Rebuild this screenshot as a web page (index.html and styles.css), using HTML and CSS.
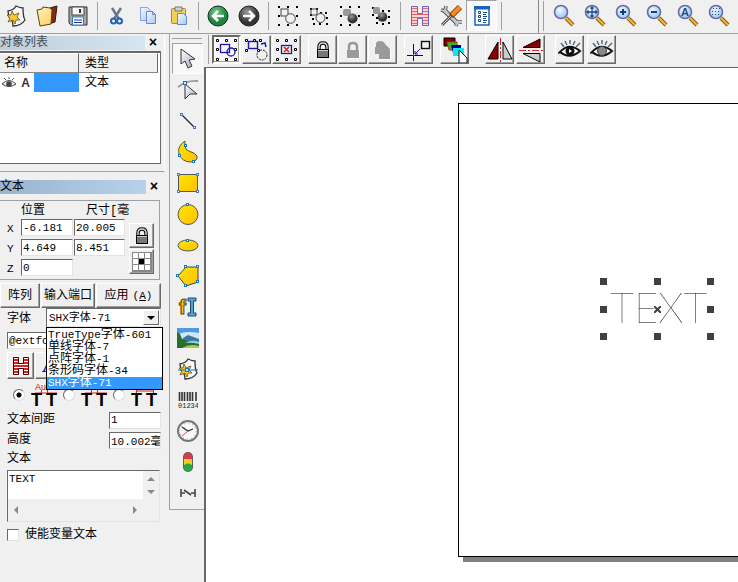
FILE: index.html
```html
<!DOCTYPE html>
<html lang="zh-CN">
<head>
    <meta charset="UTF-8">
    <meta name="viewport" content="width=device-width, initial-scale=1.0">
    <title>TEXT</title>
    <link rel="stylesheet" href="styles.css">
</head>
<body>
    <!-- shared icon parts -->
    <svg width="0" height="0" class="defs" aria-hidden="true">
        <defs>
            <linearGradient id="gold" x1="0" y1="0" x2="1" y2="1"><stop offset="0" stop-color="#ffe600"/><stop offset="1" stop-color="#ffc000"/></linearGradient>
            <linearGradient id="steel" x1="0" y1="0" x2="1" y2="1"><stop offset="0" stop-color="#fff"/><stop offset="1" stop-color="#a4a8c0"/></linearGradient>
            <linearGradient id="folder" x1="0" y1="0" x2="1" y2="1"><stop offset="0" stop-color="#fff2c0"/><stop offset="1" stop-color="#fbd05a"/></linearGradient>
            <linearGradient id="paper" x1="0" y1="0" x2="1" y2="1"><stop offset="0" stop-color="#f4f9ff"/><stop offset="1" stop-color="#a9c8f4"/></linearGradient>
            <radialGradient id="green" cx=".4" cy=".3"><stop offset="0" stop-color="#6fca88"/><stop offset="1" stop-color="#1d8440"/></radialGradient>
            <radialGradient id="dark" cx=".4" cy=".3"><stop offset="0" stop-color="#999"/><stop offset="1" stop-color="#333"/></radialGradient>
            <radialGradient id="lens" cx=".4" cy=".35"><stop offset="0" stop-color="#f2faff"/><stop offset="1" stop-color="#a9d2f3"/></radialGradient>
            <pattern id="hatch" width="3" height="3" patternUnits="userSpaceOnUse"><rect width="3" height="3" fill="#ffd5d5"/><rect width="3" height="1" fill="#e46464"/></pattern>
            <pattern id="hatchRed" width="3" height="3" patternUnits="userSpaceOnUse"><rect width="3" height="3" fill="#fff"/><rect width="3" height="2" fill="#e02020"/></pattern>
            <g id="magnifier">
                <path d="M14 14l7 7" stroke="#8a5a10" stroke-width="4"/>
                <path d="M14 14l7 7" stroke="#f0b93c" stroke-width="2"/>
                <circle cx="9" cy="8" r="6.5" fill="url(#lens)" stroke="#6b6ba4" stroke-width="1.6"/>
            </g>
            <g id="dots8" fill="#000">
                <path d="M1 1h2v2h-2zM10 1h2v2h-2zM19 1h2v2h-2zM1 10h2v2h-2zM19 10h2v2h-2zM1 19h2v2h-2zM10 19h2v2h-2zM19 19h2v2h-2z"/>
            </g>
            <g id="page">
                <path d="M3 6Q9 5 11 1Q15 3 18 3Q18 12 20 15Q16 21 8 21Q8 15 4 12z" fill="#f8f8f8" stroke="#333" stroke-width="1.3"/>
                <path d="M7 6l2 4 5-2-2 4 3 3-4 0-1 4-2-4-5 2 2-4-3-3 4 0z" fill="#f8c832" stroke="#69500c" stroke-width=".8"/>
            </g>
            <g id="lock">
                <path d="M6 11V7q0-4 4-4t4 4v4" fill="none" stroke="#000" stroke-width="3.4"/>
                <path d="M6 11V7q0-4 4-4t4 4v4" fill="none" stroke="#ddd" stroke-width="1.4"/>
                <rect x="4.5" y="9.5" width="11" height="8" fill="#777" stroke="#000"/>
                <path d="M5 10.5h10" stroke="#ccc"/>
            </g>
            <g id="handles" fill="#fff" stroke="#000">
                <path d="M1.5 1.5h2v2h-2zM10.500 1.5h2v2h-2zM19.500 1.5h2v2h-2zM1.5 10.5h2v2h-2zM19.5 10.5h2v2h-2zM1.5 20.5h2v2h-2zM10.5 20.5h2v2h-2zM19.5 20.5h2v2h-2z"/>
            </g>
            <g id="eye">
                <path d="M3 13Q12 3 23 12Q13 21 3 13z" fill="#fff" stroke="#111" stroke-width="2"/>
                <path d="M1 14q2 0 3-1" stroke="#111" stroke-width="1.5" fill="none"/>
                <path d="M4 4l3 4M8 2l2 4M13 1v4M18 2l-2 4M23 4l-4 4" stroke="#4c6f74" stroke-width="1.5"/>
            </g>
            <g id="spacing">
                <text x="1" y="24" font-family="Liberation Sans" font-weight="bold" font-size="18">T</text>
                <text x="16" y="24" font-family="Liberation Sans" font-weight="bold" font-size="18">T</text>
            </g>
        </defs>
    </svg>

    <header class="topbar">
        <button class="tb" aria-label="新建"><svg width="22" height="22"><use href="#page"/></svg></button>
        <button class="tb" aria-label="打开"><svg width="24" height="22"><path d="M15 3l7-2-2 16-6 2z" fill="#7d2c18" stroke="#3c1408"/><path d="M2 5l5-1 1-2 7 1 2 2-1 14-11 2z" fill="url(#folder)" stroke="#5c4310"/></svg></button>
        <button class="tb" aria-label="保存"><svg width="20" height="20"><path d="M1 1h18v18H3l-2-2z" fill="#a5a9ae" stroke="#333"/><rect x="4" y="1" width="12" height="8" fill="#f7f9fa" stroke="#444"/><path d="M12 3v4" stroke="#333" stroke-width="2"/><rect x="4.5" y="11" width="11" height="8" fill="#fff" stroke="#367fa0"/><path d="M6 14h8M6 16.5h8" stroke="#2430a8"/></svg></button>
        <span class="sep"></span>
        <button class="tb" aria-label="剪切"><svg width="16" height="20"><path d="M3 2l7 11M12 2L5 13" stroke="#6b7686" stroke-width="2.5"/><g fill="none" stroke="#1f63b5" stroke-width="2"><circle cx="4.5" cy="15" r="2.5"/><circle cx="10.5" cy="15" r="2.5"/></g></svg></button>
        <button class="tb" aria-label="复制"><svg width="18" height="20"><path d="M1.5 1.5h7l3 3v10h-10z" fill="url(#paper)" stroke="#86a5dc"/><path d="M7.5 5.5h6l3 3v9h-9z" fill="url(#paper)" stroke="#6489cf"/><path d="M13.5 5.5v3h3" fill="none" stroke="#6489cf"/></svg></button>
        <button class="tb" aria-label="粘贴"><svg width="18" height="20"><rect x="1.5" y="2.5" width="14" height="15" rx="1" fill="#f6cf56" stroke="#ac862c"/><path d="M5 1h7v4H5z" fill="#ccd2da" stroke="#777"/><path d="M7.5 7.5h6l3 3v8h-9z" fill="url(#paper)" stroke="#6489cf"/></svg></button>
        <span class="sep"></span>
        <button class="tb" aria-label="后退"><svg width="22" height="22"><circle cx="11" cy="11" r="10" fill="url(#green)" stroke="#222"/><path d="M17 11H6M11 6l-5 5 5 5" fill="none" stroke="#fff" stroke-width="2.6"/></svg></button>
        <button class="tb" aria-label="前进"><svg width="22" height="22"><circle cx="11" cy="11" r="10" fill="url(#dark)" stroke="#222"/><path d="M5 11h11M11 6l5 5-5 5" fill="none" stroke="#fff" stroke-width="2.6"/></svg></button>
        <span class="sep"></span>
        <button class="tb" aria-label="组合"><svg width="22" height="22"><use href="#dots8"/><rect x="4" y="4" width="7" height="7" fill="none" stroke="#444"/><circle cx="13.5" cy="13.5" r="4.8" fill="#f0f0f0" stroke="#444"/></svg></button>
        <button class="tb" aria-label="解散组合"><svg width="22" height="22"><path d="M2 3h2v2h-2zM8 3h2v2h-2zM2 9h2v2h-2zM12 7h2v2h-2zM17 7h2v2h-2zM4 13h2v2h-2zM18 12h2v2h-2zM5 18h2v2h-2zM11 18h2v2h-2zM18 18h2v2h-2z"/><rect x="3" y="4" width="6" height="6" fill="none" stroke="#444"/><circle cx="12.5" cy="13" r="4.5" fill="#f0f0f0" stroke="#444"/></svg></button>
        <button class="tb" aria-label="群组"><svg width="22" height="22"><use href="#dots8"/><rect x="4" y="4" width="8" height="7" rx="2" fill="#999"/><circle cx="13.5" cy="13.5" r="5" fill="url(#dark)"/></svg></button>
        <button class="tb" aria-label="分离群组"><svg width="22" height="22"><path d="M2 2h2v2h-2zM2 9h2v2h-2zM12 5h2v2h-2zM18 5h2v2h-2zM6 12h2v2h-2zM18 11h2v2h-2zM6 17h2v2h-2zM12 18h2v2h-2zM18 17h2v2h-2z"/><rect x="3" y="2" width="7" height="7" rx="2" fill="#999"/><circle cx="12.5" cy="12" r="4.8" fill="url(#dark)"/></svg></button>
        <span class="sep"></span>
        <button class="tb" aria-label="填充"><svg width="20" height="22"><path d="M1.5 1.5h6v7h5v-7h6v19h-6v-7h-5v7h-6z" fill="url(#hatch)" stroke="#6a62c4"/></svg></button>
        <button class="tb" aria-label="系统参数"><svg width="24" height="24"><path d="M5 6l14 14" stroke="#555" stroke-width="5"/><path d="M2 6l4 1 1-5M17 22l1-4 5 0" fill="none" stroke="#555" stroke-width="3.6"/><path d="M2 6l4 1 1-5M17 22l1-4 5 0" fill="none" stroke="#c5c8cc" stroke-width="1.8"/><path d="M5 6l14 14" stroke="#c5c8cc" stroke-width="3"/><path d="M3 21L13 11" stroke="#555" stroke-width="3"/><path d="M3 21L13 11" stroke="#ccc"/><path d="M12 12l9-9" stroke="#7c3d0b" stroke-width="6"/><path d="M13 11l8-8" stroke="#f28b24" stroke-width="4"/></svg></button>
        <button class="tb pressed" aria-label="对象列表"><svg width="16" height="20"><rect x="1" y="1" width="14" height="18" fill="#fff" stroke="#1764b4" stroke-width="1.5"/><path d="M0 1.5h16" stroke="#1764b4" stroke-width="4"/><path d="M9 6.500h4M9 8.500h3M9 10.5h4M9 12.5h3M9 14.5h4M9 16.5h3" stroke="#174a86"/><path d="M4.5 5.5h2v2h-2zM4.500 9.500h2v2h-2zM4.500 13.500h2v2h-2z" fill="#fff" stroke="#1b4b90"/></svg></button>
        <span class="sep"></span>
        <span class="edge"></span>
        <span class="grip"></span>
        <button class="tb" aria-label="缩放"><svg width="23" height="23"><use href="#magnifier"/></svg></button>
        <button class="tb" aria-label="平移"><svg width="23" height="23"><use href="#magnifier"/><path d="M9 3v10M4 8h10M7.5 4.5L9 3l1.5 1.5M7.5 11.5L9 13l1.5-1.5M5.5 6.5L4 8l1.5 1.5M12.5 6.5L14 8l-1.5 1.5" fill="none" stroke="#244a86" stroke-width="1.3"/></svg></button>
        <button class="tb" aria-label="放大"><svg width="23" height="23"><use href="#magnifier"/><path d="M9 5v6M6 8h6" stroke="#183c7a" stroke-width="2"/></svg></button>
        <button class="tb" aria-label="缩小"><svg width="23" height="23"><use href="#magnifier"/><path d="M6 8h6" stroke="#183c7a" stroke-width="2"/></svg></button>
        <button class="tb" aria-label="全部"><svg width="23" height="23"><use href="#magnifier"/><text x="5" y="12" font-family="Liberation Sans" font-weight="bold" font-size="11" fill="#244a86">A</text></svg></button>
        <button class="tb" aria-label="选择"><svg width="23" height="23"><use href="#magnifier"/><path d="M6 4.5h7M5 7.5h9M5 10.5h9" stroke="#244a86" stroke-dasharray="1 2"/></svg></button>
    </header>

    <div class="main">
        <aside class="side">
            <section class="objects">
                <h2 class="caption inactive"><span>对象列表</span><button class="close" aria-label="关闭">×</button></h2>
                <div class="list">
                    <table>
                        <thead>
                            <tr><th>名称</th><th>类型</th></tr>
                        </thead>
                        <tbody>
                            <tr>
                                <td>
                                    <div class="name">
                                        <svg width="16" height="12"><path d="M1 7Q8 0 15 7Q8 12 1 7z" fill="#eee" stroke="#444"/><circle cx="8" cy="7" r="2.8" fill="#444"/><path d="M3 1l2 2M8 0v2M13 1l-2 2" stroke="#555"/></svg>
                                        <b>A</b><span class="marked"></span>
                                    </div>
                                </td>
                                <td>文本</td>
                            </tr>
                        </tbody>
                    </table>
                </div>
            </section>

            <section class="props">
                <h2 class="caption"><span>文本</span><button class="close" aria-label="关闭">×</button></h2>

                <div class="group">
                    <div class="coords">
                        <span></span><span class="head">位置</span><span class="head size">尺寸[毫</span>
                        <label for="posX">X</label><input id="posX" value="-6.181"><input aria-label="宽" value="20.005">
                        <label for="posY">Y</label><input id="posY" value="4.649"><input aria-label="高" value="8.451">
                        <label for="posZ">Z</label><input id="posZ" value="0">
                    </div>
                    <div class="anchors">
                        <button class="raised" aria-label="锁定"><svg width="20" height="20"><use href="#lock"/></svg></button>
                        <button class="raised" aria-label="基准点"><svg width="20" height="20"><rect width="20" height="20" fill="#888"/><path d="M1 1h5v5H1zM7 1h5v5H7zM13 1h5v5h-5zM1 7h5v5H1zM13 7h5v5h-5zM1 13h5v5H1zM7 13h5v5H7zM13 13h5v5h-5z" fill="#fff"/><path d="M7 7h5v5H7z"/></svg></button>
                    </div>
                </div>

                <div class="actions">
                    <button class="raised array">阵列</button>
                    <button class="raised port">输入端口</button>
                    <button class="raised apply">应用 <span class="latin">(<u>A</u>)</span></button>
                </div>

                <div class="fontrow">
                    <label for="font">字体</label>
                    <div class="combo">
                        <select id="font"><option>SHX字体-71</option></select>
                        <span class="arrow"></span>
                        <ul class="menu" role="listbox" aria-label="字体">
                            <li role="option"><span class="latin">TrueType</span>字体<span class="latin">-601</span></li>
                            <li role="option">单线字体<span class="latin">-7</span></li>
                            <li role="option">点阵字体<span class="latin">-1</span></li>
                            <li role="option">条形码字体<span class="latin">-34</span></li>
                            <li role="option" aria-selected="true" class="current"><span class="latin">SHX</span>字体<span class="latin">-71</span></li>
                        </ul>
                    </div>
                </div>

                <input class="face" aria-label="字体名称" value="@extfont">

                <div class="styles">
                    <button class="raised" aria-label="填充"><svg width="18" height="20"><path d="M1.5 1.5h5v6h5v-6h5v17h-5v-6h-5v6h-5z" fill="url(#hatchRed)" stroke="#400"/></svg></button>
                    <button class="raised" aria-label="倾斜"><svg width="20" height="20"><text x="4" y="16" font-family="Liberation Serif" font-weight="bold" font-style="italic" font-size="20" fill="#00d">A</text></svg></button>
                </div>

                <div class="modes">
                    <input type="radio" name="mode" aria-label="自动" checked>
                    <svg width="28" height="26"><text x="5" y="8" font-family="Liberation Sans" font-size="9" fill="#d00">Au</text><path d="M5 11h22M11.5 8v5M17.5 8v5" stroke="#d22"/><use href="#spacing"/></svg>
                    <input type="radio" name="mode" aria-label="边缘">
                    <svg width="28" height="26"><path d="M5 11h22M11.5 8v5M17.5 8v5" stroke="#d22"/><use href="#spacing"/></svg>
                    <input type="radio" name="mode" aria-label="中心">
                    <svg width="28" height="26"><path d="M7 9h16M6.5 6v5M23.5 6v5" stroke="#d22"/><use href="#spacing"/></svg>
                </div>

                <div class="field"><label for="gap">文本间距</label><input id="gap" value="1"></div>
                <div class="field"><label for="height">高度</label><input id="height" value="10.002毫米"></div>
                <label class="contentlabel" for="content">文本</label>
                <div class="editor">
                    <textarea id="content" spellcheck="false">TEXT</textarea>
                    <div class="bar vertical"><i class="up"></i><i class="down"></i></div>
                    <div class="bar horizontal"><i class="left"></i><i class="right"></i></div>
                </div>
                <label class="check"><input type="checkbox">使能变量文本</label>
            </section>
        </aside>

        <nav class="tools">
            <span class="toolgrip"></span>
            <button class="tb pressed" aria-label="选取"><svg width="20" height="22"><path d="M3 1v15l4-3 3 7 4-2-3-6 6-1z" fill="url(#steel)" stroke="#333"/></svg></button>
            <button class="tb" aria-label="节点"><svg width="22" height="22"><path d="M1 8Q10 1 21 2" fill="none" stroke="#999" stroke-width="1.8"/><path d="M8 5v15l5-5 7 0z" fill="url(#steel)" stroke="#333"/><rect x="6.5" y="2.5" width="3" height="3" fill="#cfe4ff" stroke="#3d6cb0"/></svg></button>
            <button class="tb" aria-label="直线"><svg width="18" height="18"><path d="M3 3l12 12" stroke="#222" stroke-width="1.3"/><g fill="#fff" stroke="#4a78c8"><rect x="1.5" y="1.5" width="2" height="2"/><rect x="14.5" y="14.5" width="2" height="2"/></g></svg></button>
            <button class="tb" aria-label="曲线"><svg width="22" height="24"><path d="M8 1Q0 6 2 14Q5 22 14 22Q21 21 20 16Q18 13 12 11Q7 10 8 1z" fill="url(#gold)" stroke="#665030"/><g fill="#fff" stroke="#1878b8"><rect x="7.5" y="4.5" width="2" height="2"/><rect x="1.5" y="14.5" width="2" height="2"/><rect x="15.5" y="20.5" width="2" height="2"/></g></svg></button>
            <button class="tb" aria-label="矩形"><svg width="22" height="20"><rect x="1.5" y="1.5" width="19" height="17" fill="url(#gold)" stroke="#555"/><g fill="#fff" stroke="#4a78c8"><rect x=".5" y=".5" width="2" height="2"/><rect x="19.5" y=".5" width="2" height="2"/><rect x=".5" y="17.5" width="2" height="2"/><rect x="19.5" y="17.5" width="2" height="2"/></g></svg></button>
            <button class="tb" aria-label="圆"><svg width="22" height="22"><circle cx="11" cy="11.5" r="10" fill="url(#gold)" stroke="#555"/><rect x="9.5" y=".5" width="2" height="2" fill="#fff" stroke="#1878b8"/></svg></button>
            <button class="tb" aria-label="椭圆"><svg width="22" height="14"><ellipse cx="11" cy="7.5" rx="10" ry="5.5" fill="url(#gold)" stroke="#555"/><rect x="9.5" y="1.5" width="2" height="2" fill="#fff" stroke="#1878b8"/></svg></button>
            <button class="tb" aria-label="多边形"><svg width="24" height="22"><path d="M2 11L10 2h12v15l-12 4z" fill="url(#gold)" stroke="#444"/><g fill="#fff" stroke="#1878b8"><rect x=".5" y="9.5" width="2" height="2"/><rect x="8.5" y=".5" width="2" height="2"/><rect x="20.5" y=".5" width="2" height="2"/><rect x="20.5" y="15.5" width="2" height="2"/><rect x="8.5" y="19.5" width="2" height="2"/></g></svg></button>
            <button class="tb" aria-label="文字"><svg width="20" height="22"><text x="1" y="18" font-family="Liberation Sans" font-weight="bold" font-size="21" fill="#f6c21c" stroke="#5a4310">f</text><path d="M10 2h8v3h-2.5v12h2.5v3h-8v-3h2.5v-12h-2.5z" fill="#51a4dc" stroke="#234b70"/></svg></button>
            <button class="tb" aria-label="位图"><svg width="22" height="20"><rect width="22" height="20" fill="#4b9be4"/><path d="M0 7Q7 2 22 5v7H0z" fill="#cfe8f8"/><path d="M6 10l5-3 11 4v5H4z" fill="#3e7898"/><path d="M0 4l3 2 2 5 7 3 10-1v7H0z" fill="#27702c"/><path d="M8 15q8-4 14-1v2q-8-2-14-1z" fill="#8fd0ef"/><path d="M5 20q8-5 17-2v2z" fill="#b5c846"/></svg></button>
            <button class="tb" aria-label="矢量文件"><svg width="22" height="22"><use href="#page"/><path d="M1 12h20" stroke="#1878b8"/><rect x="8.5" y="10.5" width="3" height="3" fill="#bfe6ff" stroke="#1878b8"/></svg></button>
            <button class="tb" aria-label="条码"><svg width="20" height="18"><path d="M1.5 1v9M4 1v9M6.5 1v9M9.5 1v9M12 1v9M14.5 1v9M18 1v9" stroke="#333" stroke-width="1.6"/><text x="0" y="17" font-family="Liberation Mono" font-size="7" fill="#222">01234</text></svg></button>
            <button class="tb" aria-label="延时器"><svg width="24" height="24"><circle cx="12" cy="12" r="10" fill="#f8f8f8" stroke="#777" stroke-width="2"/><circle cx="12" cy="12" r="8" fill="none" stroke="#999" stroke-dasharray="1 3.2"/><path d="M6 8l6 4 5-2" fill="none" stroke="#333" stroke-width="1.3"/><path d="M12 12l-6 5" stroke="#d44"/></svg></button>
            <button class="tb" aria-label="输入输出"><svg width="12" height="22"><rect x="1" y="1" width="10" height="20" rx="5" fill="#586058"/><circle cx="6" cy="5.5" r="4" fill="#d83a50"/><rect x="2" y="8" width="8" height="6" fill="#f5cd20"/><circle cx="6" cy="16.5" r="4" fill="#28a648"/></svg></button>
            <button class="tb" aria-label="编码器"><svg width="18" height="12"><path d="M2 2v8M16 2v8M2 6h4M5 3l7 5M12 6h4" fill="none" stroke="#444" stroke-width="1.6"/></svg></button>
        </nav>

        <main class="work">
            <div class="subbar">
                <span class="subgrip"></span>
                <div class="set">
                    <button class="raised sunk" aria-label="选择全部"><svg width="23" height="24"><use href="#handles"/><rect x="5.5" y="6.5" width="9" height="8" fill="none" stroke="#1818b0" stroke-width="1.3"/><circle cx="16" cy="14" r="4" fill="none" stroke="#1818b0" stroke-width="1.3"/></svg></button>
                    <button class="raised" aria-label="反选"><svg width="25" height="24"><path d="M1.5 1.5h2v2h-2zM9.5 1.5h2v2h-2zM15.5 1.5h2v2h-2zM1.5 11.5h2v2h-2zM13.5 11.5h2v2h-2z" fill="#fff" stroke="#000"/><rect x="4.5" y="3.5" width="9" height="7" fill="none" stroke="#1818b0" stroke-width="1.4"/><circle cx="18" cy="17" r="5" fill="none" stroke="#222" stroke-dasharray="2 1"/><path d="M17 6l4-1 1 4" fill="none" stroke="#1818b0" stroke-width="1.5"/></svg></button>
                    <button class="raised" aria-label="删除选择"><svg width="23" height="24"><use href="#handles"/><rect x="6.5" y="7.5" width="10" height="8" fill="none" stroke="#1818b0" stroke-width="1.3"/><path d="M9 9l5 5M14 9l-5 5" stroke="#d22" stroke-width="1.5"/></svg></button>
                </div>
                <div class="set">
                    <button class="raised" aria-label="锁定"><svg width="20" height="20"><use href="#lock"/></svg></button>
                    <button class="raised" aria-label="解锁"><svg width="20" height="20"><path d="M6 10V6q0-3 4-3t4 4v3" fill="none" stroke="#9a9a9a" stroke-width="2.5"/><path d="M4 10h12v8H4z" fill="#9a9a9a"/><path d="M16.5 9v9.5H5" fill="none" stroke="#fff"/></svg></button>
                    <button class="raised" aria-label="全部解锁"><svg width="22" height="22"><path d="M3 8h1V5q0-3 4-3t5 3l5 5v10H7v-5H3z" fill="#9a9a9a"/><path d="M18.5 10v10.5H7" fill="none" stroke="#fff"/></svg></button>
                </div>
                <div class="set">
                    <button class="raised" aria-label="放到原点"><svg width="25" height="24"><rect x="15.5" y="3.5" width="8" height="7" fill="none" stroke="#111" stroke-width="1.4"/><path d="M1 17.5h16M7.5 6v17" stroke="#111"/><path d="M14 11l-5 5M9 13v3h3" fill="none" stroke="#1818c0"/><path d="M7 17h1v1H7z" stroke="#d22"/></svg></button>
                </div>
                <div class="set">
                    <button class="raised" aria-label="图层"><svg width="26" height="26"><path d="M2 1h11v8H2z" fill="#800000" stroke="#000"/><path d="M5 5h10v8H7z" fill="#20c020" stroke="#d22"/><path d="M9 8h10v8h-8z" fill="#000090"/><path d="M11 11h11v8H11z" fill="#10e8f0"/><path d="M17 13v13h8v-5z" fill="#fff" stroke="#111"/></svg></button>
                </div>
                <div class="set wide">
                    <button class="raised" aria-label="水平镜像"><svg width="26" height="24"><path d="M11 4v17H1z" fill="#8b0000" stroke="#000"/><path d="M16 4v17h9z" fill="#ccc" stroke="#000"/><path d="M13.5 0v24" stroke="#d22" stroke-dasharray="7 2 2 2"/></svg></button>
                    <button class="raised" aria-label="垂直镜像"><svg width="25" height="26"><path d="M5 10.5h17V2z" fill="#8b0000" stroke="#000"/><path d="M5 16.5h17V25z" fill="#ccc" stroke="#000"/><path d="M1 13.5h24" stroke="#d22" stroke-dasharray="7 2 2 2"/></svg></button>
                </div>
                <div class="set eyes">
                    <button class="raised" aria-label="显示"><svg width="25" height="22"><use href="#eye"/><circle cx="13" cy="12" r="4.5" fill="#111"/><path d="M12 10l3 2-3 2z" fill="#fff"/></svg></button>
                    <button class="raised" aria-label="隐藏"><svg width="25" height="22"><use href="#eye"/><circle cx="13" cy="12" r="4.5" fill="#888" stroke="#444"/></svg></button>
                </div>
            </div>
            <div class="canvas">
                <div class="sheet">
                    <div class="selection">
                        <span class="drawn">TEXT</span>
                        <i></i><i></i><i></i>
                        <i></i><svg width="7" height="7"><path d="M0 0l7 7M7 0L0 7" stroke="#404040" stroke-width="2"/></svg><i></i>
                        <i></i><i></i><i></i>
                    </div>
                </div>
            </div>
        </main>
    </div>
</body>
</html>
```
FILE: styles.css
```css
* {
    box-sizing: border-box;
}

body {
    margin: 0;
    min-height: 100vh;
    display: flex;
    flex-direction: column;
    overflow: hidden;
    background: #f0f0f0;
    color: #000;
    font-family: "Liberation Mono", "Noto Sans CJK SC", monospace;
    font-size: 12px;
    line-height: 16px;
}

button,
input,
select,
textarea {
    margin: 0;
    padding: 0;
    border: 0;
    border-radius: 0;
    color: inherit;
    font: inherit;
}

svg {
    display: block;
    flex: none;
}

.defs {
    position: absolute;
}

.latin {
    font-size: 11px;
}

/* toolbars */
.topbar {
    display: flex;
    height: 34px;
    padding-bottom: 2px;
    border-bottom: 1px solid #a0a0a0;
}

.tb {
    flex: none;
    display: flex;
    align-items: center;
    justify-content: center;
    width: 31px;
    height: 31px;
    background: none;
}

.pressed {
    border: 1px solid;
    border-color: #a0a0a0 #fff #fff #a0a0a0;
    background: #f8f8f8;
}

.sep {
    flex: none;
    width: 8px;
    height: 28px;
    margin-top: 2px;
    background: linear-gradient(#a0a0a0, #a0a0a0) 4px 0 / 1px 100% no-repeat;
}

.edge {
    flex: none;
    width: 34px;
    height: 33px;
    border-right: 1px solid #888;
}

.grip {
    flex: none;
    width: 5px;
    height: 30px;
    margin: 1px 4px 0 0;
    border-right: 1px solid #a0a0a0;
}

.main {
    flex: 1;
    display: flex;
}

/* left panels */
.side {
    flex: none;
    width: 169px;
}

.objects {
    height: 138px;
    margin-right: 4px;
    padding-top: 2px;
    border-right: 1px solid #fff;
    border-bottom: 1px solid #a0a0a0;
}

.props {
    margin-right: 4px;
    padding-top: 8px;
}

.caption {
    display: flex;
    justify-content: space-between;
    height: 14px;
    margin: 0;
    font-size: 12px;
    font-weight: normal;
    line-height: 14px;
}

.caption span {
    width: 146px;
    background: linear-gradient(to right, #99b4d1, #b9d1ea);
}

.inactive span {
    background: linear-gradient(to right, #bfcddb, #d7e4f2);
    color: #434e54;
}

.close {
    width: 16px;
    margin-right: 3px;
    background: none;
    font-size: 14px;
    font-weight: bold;
    line-height: 13px;
}

.list {
    height: 113px;
    margin: 1px 3px 0 0;
    border: solid #696969;
    border-width: 2px 1px 1px 0;
    background: #fff;
}

table {
    width: 158px;
    table-layout: fixed;
    border-collapse: separate;
    border-spacing: 0;
}

th {
    height: 20px;
    padding: 2px 4px 0;
    border: solid;
    border-width: 1px 1px 1px 0;
    border-color: #fff #696969 #888 #fff;
    background: #f0f0f0;
    font-weight: normal;
    text-align: left;
}

td {
    height: 19px;
    padding: 0;
}

td + td,
th + th {
    padding-left: 6px;
}

.name {
    display: flex;
    align-items: center;
    gap: 3px;
    height: 19px;
    padding-left: 1px;
}

.name b {
    width: 11px;
    color: #333;
    font-family: "Liberation Sans", sans-serif;
    text-align: center;
}

.marked {
    flex: 1;
    height: 19px;
    background: #3399ff;
}

.group {
    display: flex;
    gap: 4px;
    height: 80px;
    margin: 6px 5px 0 0;
    border: 1px solid #a0a0a0;
    border-left: 0;
}

.coords {
    display: grid;
    grid-template-columns: 20px 52px 51px;
    grid-template-rows: 16px 18px 18px 18px;
    gap: 2px 1px;
    font-size: 11px;
}

.coords label {
    padding-left: 7px;
    line-height: 20px;
}

.head {
    padding-top: 2px;
    font-size: 12px;
}

.size {
    padding-left: 12px;
    white-space: nowrap;
}

.props input:not([type]) {
    min-width: 0;
    height: 17px;
    padding-left: 1px;
    border: 1px solid;
    border-color: #696969 #e3e3e3 #e3e3e3 #696969;
    background: #fff;
    font-size: 11px;
    line-height: 15px;
}

.anchors {
    display: flex;
    flex-direction: column;
    gap: 1px;
    padding-top: 22px;
}

.raised {
    display: flex;
    align-items: center;
    justify-content: center;
    border: 1px solid;
    border-color: #fff #696969 #696969 #fff;
    box-shadow: inset -1px -1px #a0a0a0;
    background: #f0f0f0;
    white-space: nowrap;
}

.anchors .raised {
    width: 25px;
    height: 25px;
}

.actions {
    display: flex;
    gap: 1px;
    margin-top: 3px;
}

.actions .raised {
    height: 25px;
}

.array {
    width: 40px;
}

.port {
    width: 54px;
}

.apply {
    width: 65px;
    gap: 4px;
}

.fontrow {
    display: flex;
    align-items: center;
    height: 19px;
    padding-left: 7px;
}

.fontrow label {
    width: 39px;
    padding-top: 2px;
}

.combo {
    position: relative;
    display: flex;
    width: 115px;
    height: 19px;
    border: 1px solid;
    border-color: #696969 #e3e3e3 #e3e3e3 #696969;
    background: #fff;
}

.combo select {
    flex: 1;
    min-width: 0;
    padding-left: 2px;
    appearance: none;
    background: none;
    font-size: 11px;
}

.arrow {
    display: flex;
    align-items: center;
    justify-content: center;
    width: 16px;
    margin: 1px;
    border: 1px solid;
    border-color: #fff #696969 #696969 #fff;
    background: #f0f0f0;
}

.arrow::after {
    content: "";
    border: 4px solid transparent;
    border-top-color: #000;
    border-bottom: 0;
}

.menu {
    position: absolute;
    top: 18px;
    left: -1px;
    z-index: 1;
    width: 117px;
    margin: 0;
    padding: 1px 0 0;
    border: 1px solid #000;
    background: #fff;
    list-style: none;
}

.menu li {
    height: 12px;
    padding-left: 1px;
    line-height: 12px;
    white-space: nowrap;
}

.menu .current {
    background: #3399ff;
    color: #fff;
}

.props .face {
    display: block;
    width: 152px;
    height: 19px;
    margin: 5px 0 0 7px;
}

.styles {
    display: flex;
    gap: 1px;
    margin: 3px 0 0 7px;
}

.styles .raised {
    width: 27px;
    height: 27px;
}

.modes {
    display: flex;
    align-items: center;
    gap: 5px;
    height: 31px;
    padding-left: 13px;
}

.modes input {
    flex: none;
    appearance: none;
    width: 12px;
    height: 12px;
    border: 1px solid;
    border-color: #696969 #ddd #ddd #696969;
    border-radius: 50%;
    background: #fff;
}

.modes input:checked {
    background: radial-gradient(circle, #000 2px, #fff 3px);
}

.field {
    display: flex;
    justify-content: space-between;
    align-items: center;
    height: 20px;
    padding: 0 4px 0 7px;
}

.field input {
    width: 52px;
}

.contentlabel {
    display: block;
    height: 20px;
    padding-left: 7px;
    line-height: 18px;
}

.editor {
    display: grid;
    grid-template-columns: 1fr 16px;
    grid-template-rows: 28px 22px;
    margin: 0 5px 0 7px;
    border: 1px solid;
    border-color: #696969 #e3e3e3 #e3e3e3 #696969;
}

.editor textarea {
    width: 100%;
    padding-left: 1px;
    background: #fff;
    font-size: 11px;
    line-height: 16px;
    resize: none;
    overflow: hidden;
    outline: 0;
}

.bar {
    display: flex;
    align-items: center;
    justify-content: space-between;
}

.vertical {
    flex-direction: column;
    padding: 6px 0 5px;
}

.horizontal {
    height: 22px;
    padding: 0 6px;
}

.bar i {
    border: 4px solid transparent;
}

.bar .up {
    border-bottom-color: #888;
    border-top: 0;
}

.bar .down {
    border-top-color: #888;
    border-bottom: 0;
}

.bar .left {
    border-right-color: #888;
    border-left: 0;
}

.bar .right {
    border-left-color: #888;
    border-right: 0;
}

.check {
    display: flex;
    align-items: center;
    gap: 6px;
    margin: 5px 0 0 7px;
}

.check input {
    appearance: none;
    width: 12px;
    height: 12px;
    border: 1px solid;
    border-color: #696969 #e3e3e3 #e3e3e3 #696969;
    background: #fff;
}

/* drawing tools */
.tools {
    flex: none;
    align-self: flex-start;
    width: 35px;
    padding: 2px 2px 1px;
    border: solid #a0a0a0;
    border-width: 0 0 1px 1px;
}

.toolgrip {
    display: block;
    height: 3px;
    margin-bottom: 4px;
    border-bottom: 1px solid #a0a0a0;
}

/* drawing area */
.work {
    flex: 1;
    min-width: 0;
    display: flex;
    flex-direction: column;
}

.subbar {
    display: flex;
    gap: 7px;
    height: 33px;
    padding: 1px 0 0 3px;
}

.subgrip {
    flex: none;
    width: 2px;
    height: 29px;
    margin-right: -4px;
    border-right: 1px solid #a0a0a0;
}

.set {
    display: flex;
    gap: 1px;
}

.set .raised {
    flex: none;
    width: 29px;
    height: 29px;
}

.set .sunk {
    border: 2px solid;
    border-color: #696969 #fff #fff #696969;
    background: #f8f8f8;
}

.wide {
    margin-left: 9px;
    gap: 2px;
}

.eyes {
    margin-left: 3px;
    gap: 3px;
}

.canvas {
    flex: 1;
    overflow: hidden;
    padding: 35px 0 0 252px;
    border: solid #696969;
    border-width: 1px 0 0 2px;
    background: #fff;
}

.sheet {
    position: relative;
    width: 120%;
    height: 454px;
    border: 1px solid #000;
    box-shadow: 5px 5px #808080;
}

.selection {
    position: absolute;
    top: 174px;
    left: 141px;
    display: grid;
    grid-template-columns: repeat(3, 7px);
    justify-content: space-between;
    align-content: space-between;
    width: 114px;
    height: 62px;
}

.selection i {
    width: 7px;
    height: 7px;
    background: #404040;
}

.drawn {
    position: absolute;
    top: 5px;
    left: 10px;
    font-family: Lato, sans-serif;
    font-size: 42px;
    font-weight: 100;
    line-height: 48px;
    will-change: transform;
}
```
